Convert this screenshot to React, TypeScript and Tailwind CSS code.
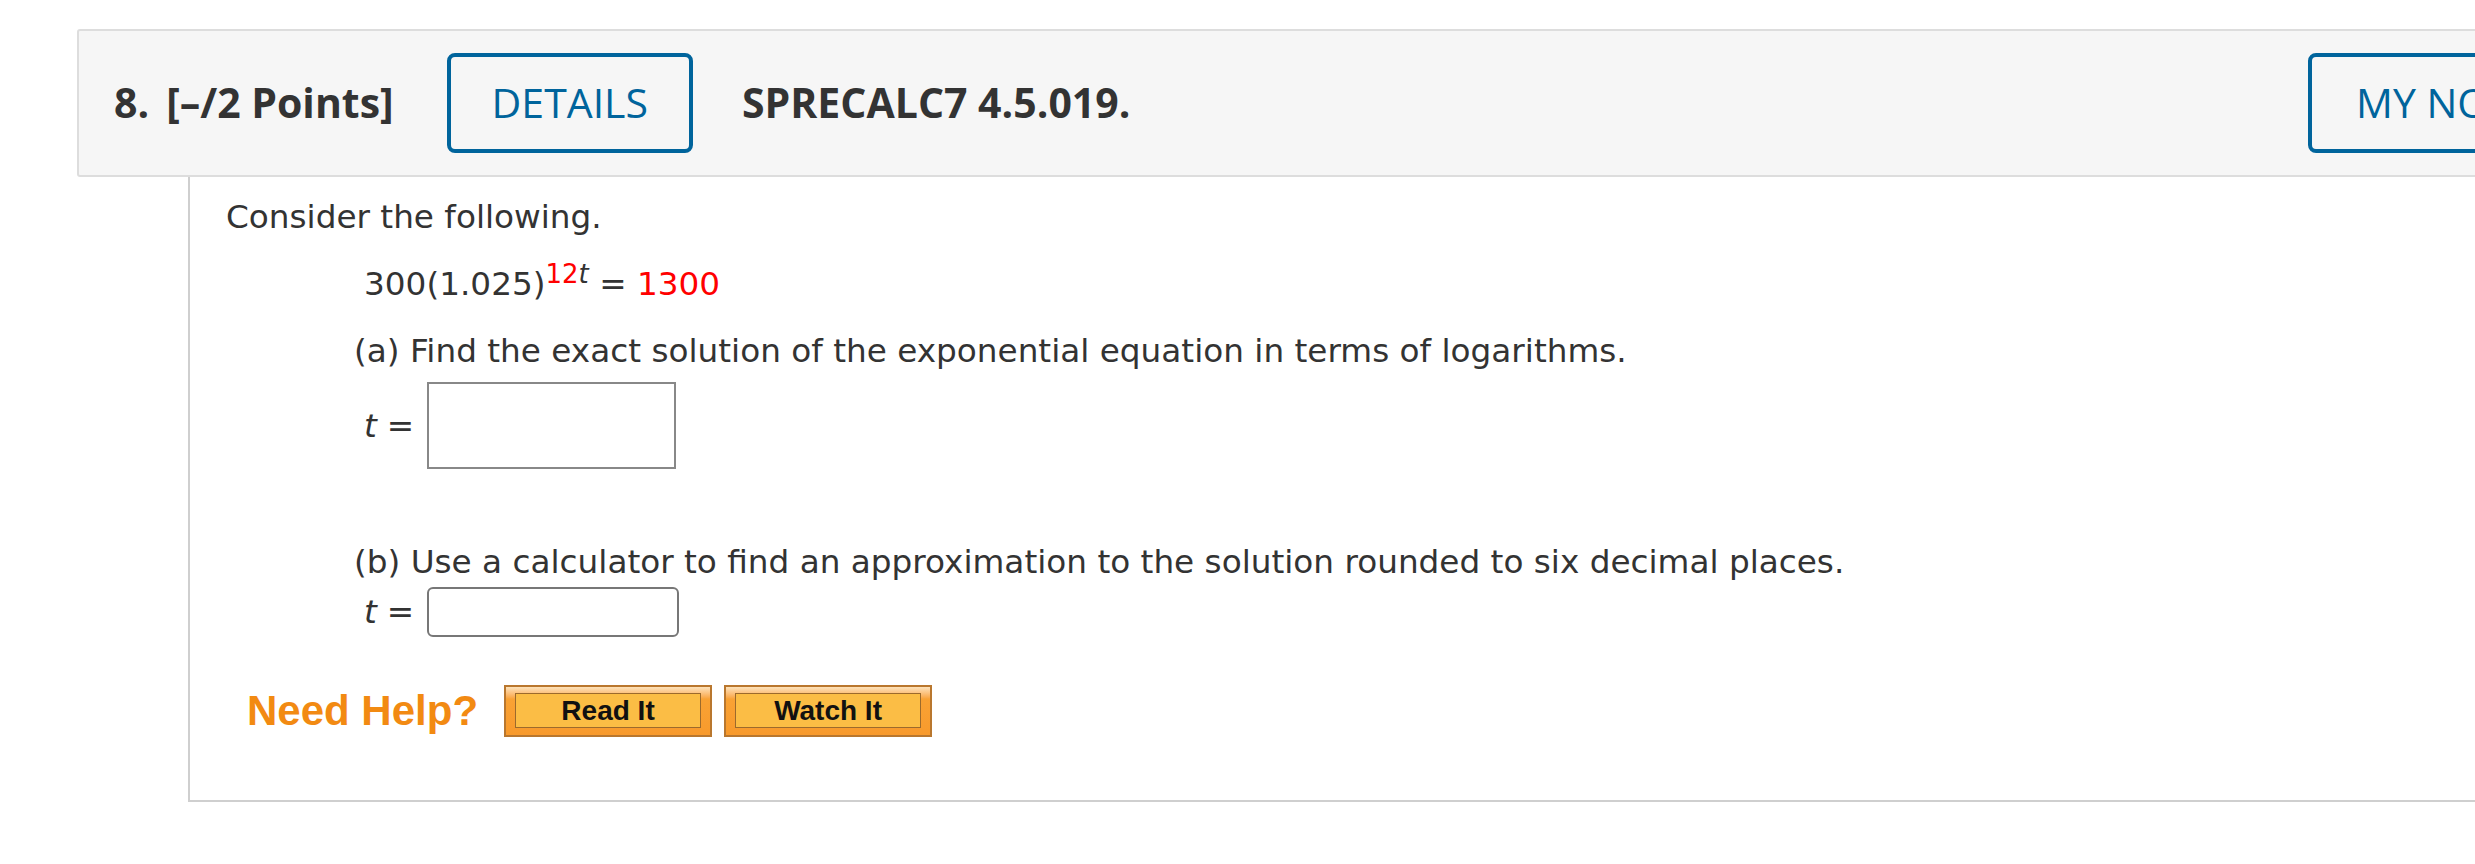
const OPEN_SANS = "font-['Open_Sans',sans-serif]";
const VERDANA = "font-['DejaVu_Sans','Verdana',sans-serif]";
const ARIAL = "font-['Liberation_Sans','Arial',sans-serif]";

function HelpButton({ label }: { label: string }) {
  return (
    <button
      type="button"
      className="flex h-[52px] w-[208px] border-2 border-[#b9772e] bg-linear-to-b from-[#fde2ba] from-0% via-[#f9a234] via-25% to-[#f89a2c] px-[9px] pt-[6px] pb-[7px]"
    >
      <span
        className={`flex h-full w-full items-center justify-center border border-[#9c6a2c] bg-[#fbbd45] text-[28px] font-bold leading-none text-[#111111] ${ARIAL}`}
      >
        {label}
      </span>
    </button>
  );
}

function AnswerRow({ tall }: { tall?: boolean }) {
  return (
    <div className="flex items-center pl-[10px]">
      <span className="italic">t</span>
      <span className="ml-[10px]">=</span>
      <div
        className={
          tall
            ? "ml-[13px] h-[87px] w-[249px] border-2 border-[#888888] bg-white"
            : "ml-[13px] h-[50px] w-[252px] rounded-[6px] border-2 border-[#777777] bg-white"
        }
      />
    </div>
  );
}

export default function App() {
  return (
    <div className="h-[864px] w-[2475px] overflow-hidden bg-white pt-[29px] pl-[77px]">
      {/* question header */}
      <div
        className={`flex h-[148px] w-[2560px] items-center rounded-[3px] border-2 border-[#dddddd] bg-[#f6f6f6] pl-[35px] pr-[37px] text-[41px] text-[#333333] ${OPEN_SANS}`}
      >
        <span className="font-bold">8.</span>
        <span className="ml-[17px] font-bold">[–/2 Points]</span>
        <button
          type="button"
          className="ml-[53px] flex h-[100px] items-center rounded-[8px] border-4 border-[#00649c] px-[41px] text-[#00649c]"
        >
          DETAILS
        </button>
        <span className="ml-[49px] font-bold">SPRECALC7 4.5.019.</span>
        <button
          type="button"
          className="ml-auto flex h-[100px] w-[290px] items-center rounded-[8px] border-4 border-[#00649c] pl-[44px] text-[#00649c]"
        >
          MY NOTES
        </button>
      </div>

      {/* question body */}
      <div
        className={`ml-[111px] border-b-2 border-l-2 border-[#cfcfcf] pt-[21px] pb-[63px] pl-[36px] text-[32.7px] leading-[38px] text-[#333333] ${VERDANA}`}
      >
        <p>Consider the following.</p>

        <div className="mt-[29px] ml-[128px]">
          <div className="pl-[10px]">
            300(1.025)
            <sup className="relative top-0 align-[12px] text-[26px] leading-[0]">
              <span className="text-[#ff0000]">12</span>
              <span className="italic">t</span>
            </sup>{" "}
            = <span className="text-[#ff0000]">1300</span>
          </div>

          <p className="mt-[29px]">
            (a) Find the exact solution of the exponential equation in terms of logarithms.
          </p>
          <div className="mt-[12px]">
            <AnswerRow tall />
          </div>

          <p className="mt-[74px]">
            (b) Use a calculator to find an approximation to the solution rounded to six decimal places.
          </p>
          <div className="mt-[6px]">
            <AnswerRow />
          </div>
        </div>

        <div className="mt-[48px] ml-[21px] flex items-center">
          <span className={`text-[42px] font-bold leading-none text-[#f28a12] ${ARIAL}`}>
            Need Help?
          </span>
          <div className="ml-[26px] flex gap-[12px]">
            <HelpButton label="Read It" />
            <HelpButton label="Watch It" />
          </div>
        </div>
      </div>
    </div>
  );
}
